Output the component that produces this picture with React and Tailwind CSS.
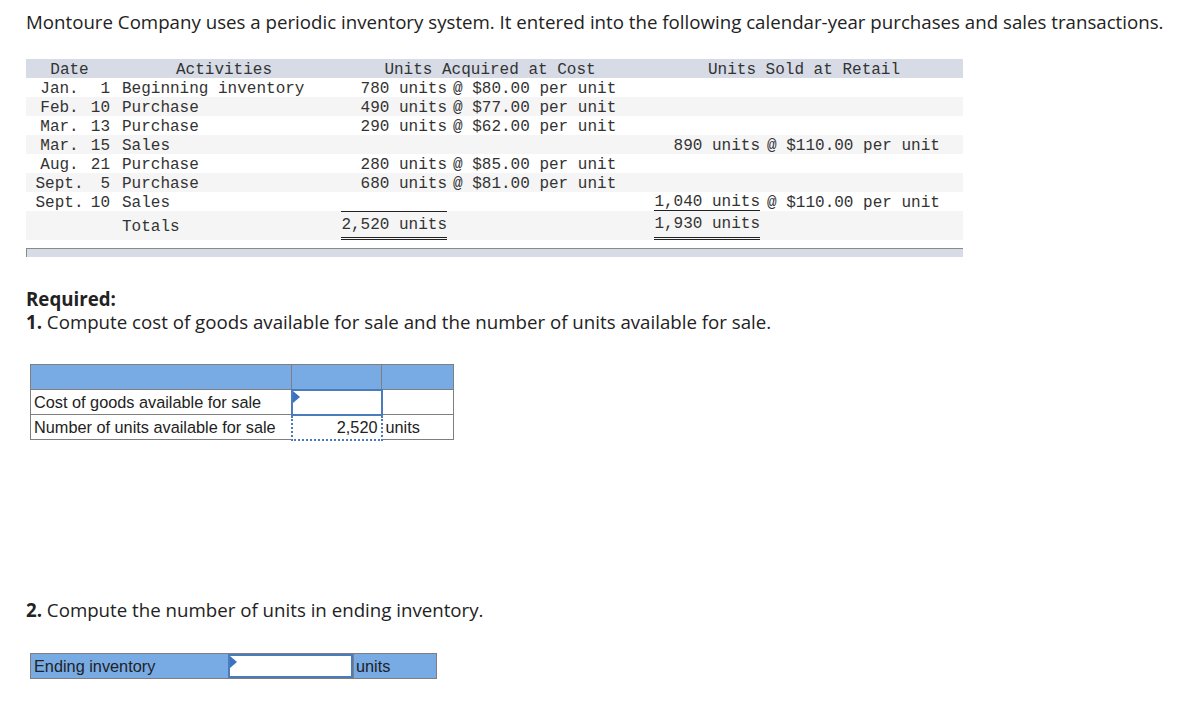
import React from "react";

const mono = { fontFamily: '"Liberation Mono", "Courier New", monospace' };

const rows = [
  { m: "Jan.", d: "1", act: "Beginning inventory", qa: "780 units", ca: "@ $80.00 per unit", qs: "", cs: "", bg: "bg-white" },
  { m: "Feb.", d: "10", act: "Purchase", qa: "490 units", ca: "@ $77.00 per unit", qs: "", cs: "", bg: "bg-[#f5f5f5]" },
  { m: "Mar.", d: "13", act: "Purchase", qa: "290 units", ca: "@ $62.00 per unit", qs: "", cs: "", bg: "bg-white" },
  { m: "Mar.", d: "15", act: "Sales", qa: "", ca: "", qs: "890 units", cs: "@ $110.00 per unit", bg: "bg-[#f5f5f5]" },
  { m: "Aug.", d: "21", act: "Purchase", qa: "280 units", ca: "@ $85.00 per unit", qs: "", cs: "", bg: "bg-white" },
  { m: "Sept.", d: "5", act: "Purchase", qa: "680 units", ca: "@ $81.00 per unit", qs: "", cs: "", bg: "bg-[#f5f5f5]" },
  { m: "Sept.", d: "10", act: "Sales", qa: "", ca: "", qs: "1,040 units", cs: "@ $110.00 per unit", bg: "bg-white", under: true },
];

function Triangle() {
  return (
    <svg className="absolute left-0 top-0" width="7" height="12" viewBox="0 0 7 12">
      <polygon points="0,0 7,6 0,12" fill="#3b73c2" />
    </svg>
  );
}

const sans = { fontFamily: '"Open Sans", Lato, "Liberation Sans", Arial, sans-serif' };
const arial = { fontFamily: '"Liberation Sans", Arial, sans-serif' };

export default function App() {
  return (
    <div className="bg-white min-h-[703px] w-[1201px] text-[#222]" style={sans}>
      <div className="pl-[26px] pt-[10px]">
        <p className="text-[18.7px] leading-[24px] text-[#222] whitespace-nowrap">
          Montoure Company uses a periodic inventory system. It entered into the following calendar-year purchases and sales transactions.
        </p>
      </div>

      <div className="pl-[26px] pt-[25px]" style={mono}>
        <table className="border-collapse text-[16px] text-[#333] table-fixed w-[937px]">
          <colgroup>
            <col className="w-[63px]" />
            <col className="w-[24px]" />
            <col className="w-[222px]" />
            <col className="w-[114px]" />
            <col className="w-[196px]" />
            <col className="w-[116px]" />
            <col className="w-[202px]" />
          </colgroup>
          <thead>
            <tr className="bg-[#d6dbe6] h-[19px]">
              <th colSpan={2} className="font-normal text-center p-0 pt-[3px] leading-[16px]">Date</th>
              <th className="font-normal text-center p-0 pt-[3px] leading-[16px]">Activities</th>
              <th colSpan={2} className="font-normal text-center p-0 pt-[3px] leading-[16px]">Units Acquired at Cost</th>
              <th colSpan={2} className="font-normal text-center p-0 pt-[3px] leading-[16px]">Units Sold at Retail</th>
            </tr>
          </thead>
          <tbody>
            {rows.map((r, i) => (
              <tr key={i} className={`${r.bg} h-[19px]`}>
                <td className="text-center p-0 pl-[4px] pt-[3px] leading-[16px] whitespace-pre">{r.m}</td>
                <td className="text-right p-0 pr-[3px] pt-[3px] leading-[16px] whitespace-pre">{r.d}</td>
                <td className="p-0 pl-[9px] pt-[3px] leading-[16px] whitespace-pre">{r.act}</td>
                <td className="text-right p-0 pr-[2px] pt-[3px] leading-[16px] whitespace-pre">{r.qa}</td>
                <td className="p-0 pl-[4px] pt-[3px] leading-[16px] whitespace-pre">{r.ca}</td>
                <td className="text-right p-0 pr-[1px] pt-[3px] leading-[16px] whitespace-pre">
                  {r.under ? (
                    <span className="inline-block align-top border-b border-[#222] leading-[15px]">{r.qs}</span>
                  ) : (
                    r.qs
                  )}
                </td>
                <td className="p-0 pl-[6px] pt-[3px] leading-[16px] whitespace-pre">{r.cs}</td>
              </tr>
            ))}
            <tr className="bg-[#f5f5f5] h-[29px]">
              <td className="p-0"></td>
              <td className="p-0"></td>
              <td className="p-0 pl-[9px] align-middle pt-[2px] leading-[20px]">Totals</td>
              <td className="p-0 pr-[2px] text-right align-top leading-[0px]">
                <span className="inline-block align-top border-t border-[#222] border-b-[3px] border-b-[#222] leading-[24px] h-[29px] pt-[1px]" style={{ borderBottomStyle: "double" }}>
                  2,520 units
                </span>
              </td>
              <td className="p-0"></td>
              <td className="p-0 pr-[1px] text-right align-top leading-[0px]">
                <span className="inline-block align-top border-b-[3px] border-[#222] leading-[25px] h-[29px] pt-[1px]" style={{ borderBottomStyle: "double" }}>
                  1,930 units
                </span>
              </td>
              <td className="p-0"></td>
            </tr>
          </tbody>
        </table>
        <div className="h-[8px] w-[937px]"></div>
        <div className="h-[9px] w-[937px] bg-[#d6dbe6] border-t border-l border-[#8a8a8a]"></div>
      </div>

      <div className="pl-[26px] pt-[30px] text-[18.7px] leading-[23px]">
        <p className="font-bold">Required:</p>
        <p>
          <span className="font-bold">1.</span> Compute cost of goods available for sale and the number of units available for sale.
        </p>
      </div>

      <div className="pl-[30px] pt-[31px]" style={arial}>
        <table className="border-collapse text-[16.3px] table-fixed w-[423px] text-[#222]">
          <colgroup>
            <col className="w-[261px]" />
            <col className="w-[90px]" />
            <col className="w-[72px]" />
          </colgroup>
          <tbody>
            <tr className="h-[25px] bg-[#78abe4]">
              <td className="border border-[#7f7f7f] p-0"></td>
              <td className="border border-[#7f7f7f] p-0"></td>
              <td className="border border-[#7f7f7f] p-0"></td>
            </tr>
            <tr className="h-[25px] bg-white">
              <td className="border border-[#7f7f7f] border-t-[#222] p-0 pl-[3px] leading-[24px] whitespace-nowrap">Cost of goods available for sale</td>
              <td className="border-2 border-[#4a7cbd] p-0 relative">
                <Triangle />
              </td>
              <td className="border border-[#7f7f7f] border-t-[#222] p-0"></td>
            </tr>
            <tr className="h-[25px] bg-white">
              <td className="border border-[#7f7f7f] p-0 pl-[3px] leading-[24px] whitespace-nowrap">Number of units available for sale</td>
              <td className="border-2 border-dotted border-[#4a7cbd] p-0 pr-[3px] text-right leading-[22px]">2,520</td>
              <td className="border border-[#7f7f7f] border-l-2 border-l-[#4a7cbd] p-0 pl-[3px] leading-[24px]" style={{ borderLeftStyle: "dotted" }}>units</td>
            </tr>
          </tbody>
        </table>
      </div>

      <div className="pl-[26px] pt-[157px] text-[18.7px] leading-[23px]">
        <p>
          <span className="font-bold">2.</span> Compute the number of units in ending inventory.
        </p>
      </div>

      <div className="pl-[30px] pt-[32px]" style={arial}>
        <div className="flex w-[407px] h-[26px] border border-[#7f7f7f] bg-[#78abe4] text-[16.3px] text-[#222]">
          <div className="w-[197px] pl-[3px] leading-[24px]">Ending inventory</div>
          <div className="w-[125px] bg-white border-2 border-[#4a7cbd] relative">
            <Triangle />
          </div>
          <div className="flex-1 pl-[2px] leading-[24px] border-l border-[#7f7f7f]">units</div>
        </div>
      </div>
    </div>
  );
}
